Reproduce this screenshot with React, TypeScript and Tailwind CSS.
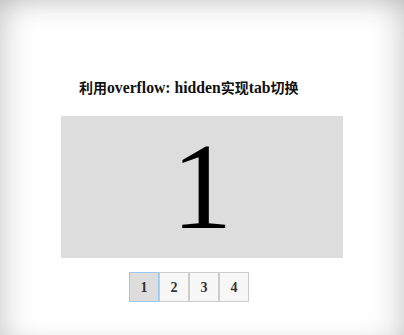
import React, { useState } from "react";

const tabs = ["1", "2", "3", "4"];

export default function App() {
  const [active, setActive] = useState(0);

  return (
    <div
      className="h-screen w-full overflow-hidden bg-white shadow-[inset_0_18px_28px_-12px_rgba(0,0,0,0.14),inset_22px_0_30px_-14px_rgba(0,0,0,0.14),inset_-22px_0_30px_-14px_rgba(0,0,0,0.14)]"
      style={{ fontFamily: '"Liberation Serif", "Noto Sans CJK SC", serif' }}
    >
      <div className="pt-[79px] pl-[61px]">
        <h3 className="h-[18px] pl-[18px] text-[14px] leading-[18px] font-bold text-[#111]">
          利用<span className="text-[15.7px]">overflow: hidden</span>实现
          <span className="text-[15.7px]">tab</span>切换
        </h3>
        <div className="mt-[19px] flex h-[142px] w-[282px] items-center justify-center overflow-hidden bg-[#dddddd]">
          <span className="text-[122px] leading-none text-black">
            {tabs[active]}
          </span>
        </div>
        <div className="mt-[14px] ml-[68px] flex">
          {tabs.map((t, i) => (
            <button
              key={t}
              onClick={() => setActive(i)}
              className={
                i === active
                  ? "flex h-[30px] w-[30px] items-center justify-center border border-[#9cc8f0] bg-[#dddddd] text-[14px] font-bold text-[#333]"
                  : "flex h-[30px] w-[30px] items-center justify-center border border-[#cccccc] bg-[#f7f7f7] text-[14px] font-bold text-[#333]"
              }
            >
              {t}
            </button>
          ))}
        </div>
      </div>
    </div>
  );
}
